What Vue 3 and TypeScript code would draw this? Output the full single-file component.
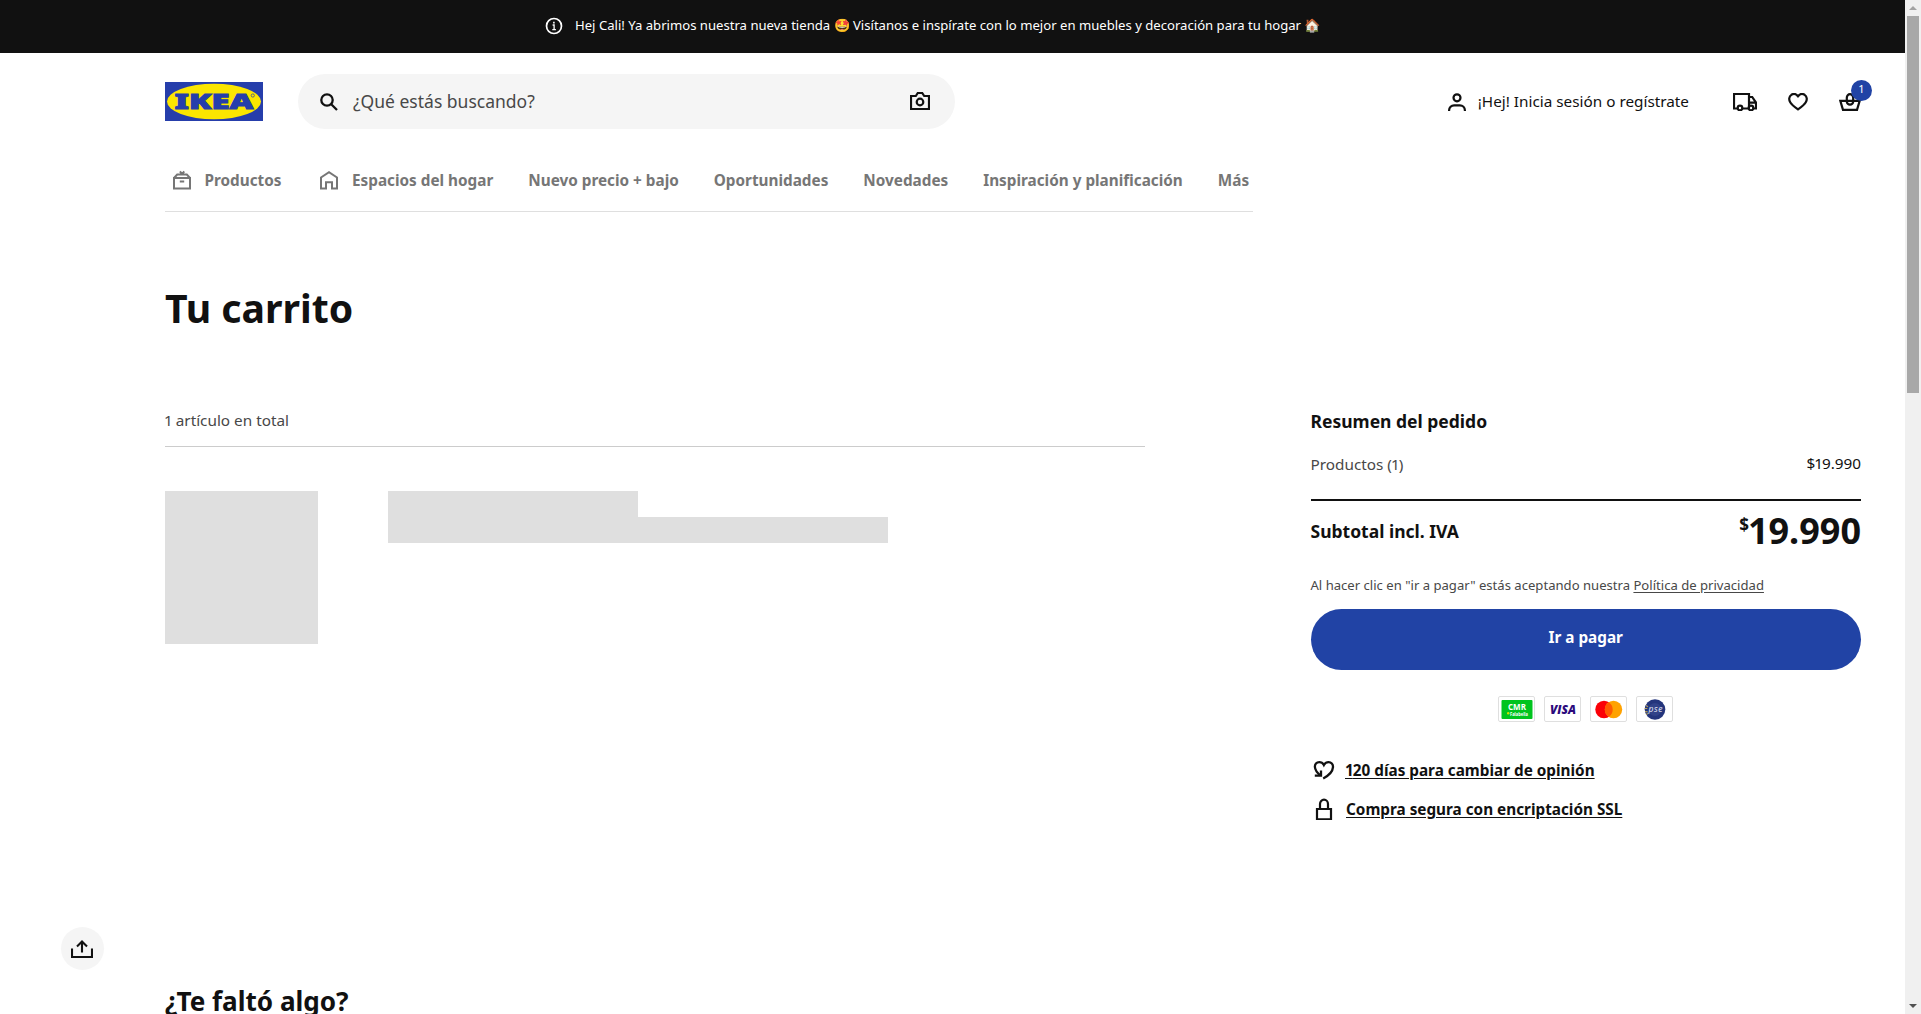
<script setup lang="ts">
const navItems: string[] = [
  'Nuevo precio + bajo',
  'Oportunidades',
  'Novedades',
  'Inspiración y planificación',
  'Más'
]
</script>

<template>
  <div class="page">
    <div class="content">
      <div class="banner">
        <svg class="info" viewBox="0 0 18 18" fill="none" stroke="currentColor">
          <circle cx="9" cy="9" r="7.5" stroke-width="1.7" />
          <path d="M7.6 8h1.5v4.8M7.3 12.6h3.6" stroke-width="1.3" />
          <path d="M8.1 5.6h1.6" stroke-width="1.8" />
        </svg>
        <span>Hej Cali! Ya abrimos nuestra nueva tienda 🤩 Visítanos e inspírate con lo mejor en muebles y decoración para tu hogar 🏠</span>
      </div>

      <header class="header">
        <svg class="logo" viewBox="0 0 98 39">
          <rect width="98" height="39" fill="#263eab" />
          <ellipse cx="49" cy="19.5" rx="47" ry="17.8" fill="#fbe600" />
          <text x="9.5" y="26.5" textLength="79" lengthAdjust="spacingAndGlyphs">IKEA</text>
          <circle cx="87.8" cy="13.5" r="1.6" fill="none" stroke="#263eab" stroke-width=".7" />
        </svg>
        <div class="search">
          <svg class="magnifier" viewBox="0 0 18 18" fill="none" stroke="#111" stroke-width="2.3">
            <circle cx="7" cy="7" r="5.7" />
            <path d="M11 11l6 6" />
          </svg>
          <span class="placeholder">¿Qué estás buscando?</span>
          <svg class="camera" viewBox="0 0 20 18" fill="none" stroke="#111" stroke-width="2.2">
            <path d="M1 4h4.8l2-3h4.4l2 3H19v13H1z" />
            <circle cx="10" cy="10" r="3.3" />
          </svg>
        </div>
        <div class="account">
          <svg class="user" viewBox="0 0 18 18" fill="none" stroke="#111" stroke-width="2.2">
            <circle cx="9" cy="4.8" r="3.5" />
            <path d="M1.1 18v-.7a5 5 0 0 1 5-5h5.8a5 5 0 0 1 5 5v.7" />
          </svg>
          <span>¡Hej! Inicia sesión o regístrate</span>
        </div>
        <svg class="truck" viewBox="0 0 24 18" fill="none" stroke="#111" stroke-width="2.2">
          <path d="M4 15.5H1V1h15v14.5M10 15.5h5.5M16 4h3.2L23 9.6v5.9h-2M16 9.6h7" />
          <circle cx="7" cy="15" r="2.3" />
          <circle cx="18" cy="15" r="2.3" />
        </svg>
        <svg class="heart" viewBox="0 0 20 18" fill="none" stroke="#111" stroke-width="2.2">
          <path d="M10 3.2C8.2.9 5.4.6 3.4 1.8 1 3.4.6 6.8 2.2 9.2 3.5 11.5 7 14.2 10 16.4c3-2.2 6.5-4.9 7.8-7.2 1.6-2.4 1.2-5.8-1.2-7.4C14.6.6 11.8.9 10 3.2z" />
        </svg>
        <div class="basket">
          <svg viewBox="0 0 22 18" fill="none" stroke="#111" stroke-width="2.2">
            <path d="M1.3 7.8h19.4L18 16.9H4z" />
            <path d="M7.8 8.5V4.8a3.2 3.6 0 0 1 6.4 0v3.7a3.2 3.2 0 0 1-6.4 0z" />
          </svg>
          <span class="badge">1</span>
        </div>
      </header>

      <nav class="nav">
        <span class="nav-item">
          <svg viewBox="0 0 26 26" fill="none" stroke="currentColor" stroke-width="2">
            <path d="M5 11h16v10.500H5zM5 11l3.200-3.500h9.600L21 11M11 4.300l2.200 3M15.200 4.300l-2.200 3M10.800 14.600h4.400" />
          </svg>
          <span>Productos</span>
        </span>
        <span class="nav-item">
          <svg viewBox="0 0 26 26" fill="none" stroke="currentColor" stroke-width="2">
            <path d="M5 21.500V10.500L13 5.200l8 5.300v11h-5v-6.300h-6v6.300z" />
          </svg>
          <span>Espacios del hogar</span>
        </span>
        <span v-for="item in navItems" :key="item">{{ item }}</span>
      </nav>

      <h1 class="title">Tu carrito</h1>

      <main class="main">
        <section class="items">
          <p class="count"><span class="one">1</span> artículo en total</p>
          <div class="skeleton">
            <div class="thumb" />
            <div class="lines">
              <div class="line short" />
              <div class="line" />
            </div>
          </div>
        </section>

        <aside class="summary">
          <h2 class="summary-title">Resumen del pedido</h2>
          <div class="row">
            <span>Productos (<span class="one">1</span>)</span>
            <span class="amount">$<span class="one">1</span>9.990</span>
          </div>
          <div class="subtotal">
            <span>Subtotal incl. IVA</span>
            <span class="price"><sup>$</sup>19.990</span>
          </div>
          <p class="terms">Al hacer clic en "ir a pagar" estás aceptando nuestra <u>Política de privacidad</u></p>
          <button class="pay">Ir a pagar</button>
          <div class="cards">
            <svg viewBox="0 0 37 26">
              <rect x=".5" y=".5" width="36" height="25" rx="1.5" fill="#fff" stroke="#dfdfdf" />
              <rect x="3.5" y="4" width="31" height="19" rx="1" fill="#00c41e" />
              <text x="10" y="14.3" class="cmr" textLength="18" lengthAdjust="spacingAndGlyphs">CMR</text>
              <circle cx="10.200" cy="17.2" r="1.2" fill="#d8e000" />
              <text x="12" y="19.6" class="falabella" textLength="18" lengthAdjust="spacingAndGlyphs">Falabella</text>
            </svg>
            <svg viewBox="0 0 37 26">
              <rect x=".5" y=".5" width="36" height="25" rx="1.5" fill="#fff" stroke="#dfdfdf" />
              <text x="6" y="18" class="visa" textLength="26" lengthAdjust="spacingAndGlyphs">VISA</text>
            </svg>
            <svg viewBox="0 0 37 26">
              <rect x=".5" y=".5" width="36" height="25" rx="1.5" fill="#fff" stroke="#dfdfdf" />
              <circle cx="14" cy="13.5" r="8.7" fill="#fb0007" />
              <circle cx="23.5" cy="13.5" r="8.7" fill="#ffa200" />
              <path d="M18.750 6.200a8.700 8.700 0 0 1 0 14.600a8.700 8.700 0 0 1 0-14.600z" fill="#ff5a00" />
            </svg>
            <svg viewBox="0 0 37 26">
              <rect x=".5" y=".5" width="36" height="25" rx="1.5" fill="#fff" stroke="#dfdfdf" />
              <circle cx="19" cy="13.5" r="10.3" fill="#24357c" />
              <circle cx="19" cy="13.5" r="6.5" fill="#3d4f93" opacity=".5" />
              <path d="M10 9.500l2 1.200M8.700 12.500h2.600M9 15.500l2.600.4M10 18.500l2-1" stroke="#b5a05a" stroke-width="1.2" />
              <text x="12.5" y="16" class="pse" textLength="14">pse</text>
            </svg>
          </div>
          <div class="perk">
            <svg viewBox="0 0 22 22" fill="none" stroke="#111" stroke-width="2.3">
              <path d="M10.200 19.500C15 17 19.700 12.500 20 8.200c.2-3-1.900-5-4.400-5-2 0-3.700 1-4.700 2.800C10 4.200 8.300 3.200 6.300 3.200 3.500 3.200 1.700 5.300 1.900 8c.2 2.600 2 5.500 5.300 8.400" />
              <path d="M8 11.500v5.200H1.800" />
            </svg>
            <u><span class="one">1</span>20 días para cambiar de opinión</u>
          </div>
          <div class="perk">
            <svg viewBox="0 0 22 22" fill="none" stroke="#111" stroke-width="2.2">
              <path d="M4 11h14v10.300H4zM7 10.500V6a4 4.300 0 0 1 8 0v4.500" />
            </svg>
            <u>Compra segura con encriptación SSL</u>
          </div>
        </aside>
      </main>

      <h2 class="missing">¿Te faltó algo?</h2>

      <button class="share" aria-label="Compartir">
        <svg viewBox="0 0 22 18" fill="none" stroke="#111" stroke-width="2.1">
          <path d="M1 8.500V17h20V8.500M11 12.500V1.500M6 6.500l5-5 5 5" />
        </svg>
      </button>
    </div>

    <div class="scrollbar">
      <span class="arrow up" />
      <span class="handle" />
      <span class="arrow down" />
    </div>
  </div>
</template>

<style>
body {
  margin: 0;
  overflow: hidden;
}
</style>

<style scoped>
.page {
  display: flex;
  height: 1014px;
  overflow: hidden;
  background: #fff;
  color: #111;
  font-family: 'Noto Sans', sans-serif;
  font-size: 15.3px;
}
svg { display: block; flex: none; }
button { border: 0; padding: 0; font: inherit; }
h1, h2, p { margin: 0; }
u { text-underline-offset: 2px; }
.content { flex: 1; min-width: 0; position: relative; }

.banner {
  height: 53px;
  background: #111;
  color: #fff;
  display: flex;
  box-sizing: border-box;
  padding: 0 0 2px 545px;
  align-items: center;
  font-size: 13.120px;
  white-space: nowrap;
}
.banner span { padding-bottom: 2px; }
.info { width: 18px; height: 18px; margin-right: 12px; }

.header { display: flex; align-items: center; height: 55px; padding: 21px 44px 0 165px; }
.logo { width: 98px; height: 39px; margin-right: 35px; }
.logo text { font-size: 20.5px; font-weight: 900; fill: #263eab; stroke: #263eab; stroke-width: .9px; }
.search {
  width: 657px;
  height: 55px;
  border-radius: 28px;
  background: #f5f5f5;
  display: flex;
  align-items: center;
  box-sizing: border-box;
  padding: 0 25px 0 22px;
}
.magnifier { width: 18px; height: 18px; margin-right: 15px; }
.placeholder { flex: 1; font-size: 17.5px; padding-bottom: 2px; color: #484848; }
.camera { width: 20px; height: 18px; margin-top: -2px; }
.account { display: flex; align-items: center; gap: 12px; margin-left: auto; margin-right: 44px; }
.account span { padding-bottom: 2px; }
.user { width: 18px; height: 18px; }
.truck { width: 24px; height: 18px; margin-right: 31px; }
.heart { width: 20px; height: 18px; margin-right: 31px; }
.basket { position: relative; }
.basket svg { width: 22px; height: 18px; }
.badge {
  position: absolute;
  left: 12px;
  top: -13px;
  width: 21px;
  height: 21px;
  border-radius: 50%;
  background: #2143a5;
  color: #fff;
  font-size: 11px;
  line-height: 18px;
  text-align: center;
}

.nav {
  width: fit-content;
  height: 62px;
  box-sizing: border-box;
  margin: 21px 0 0 165px;
  padding: 0 4px 2px;
  border-bottom: 1px solid #dfdfdf;
  display: flex;
  align-items: center;
  gap: 35px;
  color: #767676;
  font-weight: 700;
  white-space: nowrap;
}
.nav-item { display: flex; align-items: center; gap: 9.5px; }
.nav-item svg { width: 26px; height: 26px; }

.title { margin: 66px 0 0 165px; font-size: 39.2px; line-height: 60px; height: 60px; }

.main { display: flex; justify-content: space-between; height: 581px; margin: 62px 44px 0 165px; }
.items { width: 980px; }
.count { height: 46px; line-height: 40px; color: #484848; border-bottom: 1px solid #ccc; }
.one { margin-left: -1px; letter-spacing: -1px; }
.skeleton { display: flex; gap: 70px; margin-top: 44px; }
.thumb { width: 153px; height: 153px; background: #dfdfdf; }
.line { width: 500px; height: 26px; background: #dfdfdf; }
.line.short { width: 250px; }

.summary { width: 550.5px; }
.summary-title { font-size: 17.5px; line-height: 42px; }
.row { display: flex; justify-content: space-between; height: 47px; line-height: 24px; margin-top: 10px; color: #484848; }
.amount { color: #111; line-height: 22px; }
.subtotal {
  border-top: 2px solid #111;
  height: 60px;
  display: flex;
  justify-content: space-between;
  align-items: center;
  font-size: 17.5px;
  font-weight: 700;
}
.price { display: flex; font-size: 36px; line-height: 59px; height: 60px; }
.price sup { font-size: 17px; line-height: 47px; margin-right: -1px; }
.terms { margin-top: 12px; line-height: 24px; font-size: 13.1px; color: #484848; }
.pay {
  display: block;
  width: 100%;
  height: 61px;
  margin-top: 12px;
  padding-bottom: 5px;
  border-radius: 31px;
  background: #2143a5;
  color: #fff;
  font-weight: 700;
}
.cards { display: flex; justify-content: center; gap: 9px; margin: 26px 0 28px; }
.cards svg { width: 37px; height: 26px; }
.cmr { font: 700 9.5px 'Open Sans', sans-serif; fill: #fff; }
.falabella { font: 700 4.5px 'Open Sans', sans-serif; fill: #fff; }
.visa { font: italic 800 12.5px 'Open Sans', sans-serif; fill: #2b0a7c; }
.pse { font: italic 400 8.5px 'Open Sans', sans-serif; fill: #e6e9f5; }
.perk { display: flex; align-items: center; height: 39.5px; gap: 11.5px; padding-left: 2px; font-weight: 700; }
.perk svg { width: 22px; height: 22px; }

.missing { margin-left: 165px; font-size: 26.1px; line-height: 41px; white-space: nowrap; }

.share {
  position: absolute;
  left: 61px;
  top: 927px;
  width: 43px;
  height: 43px;
  border-radius: 50%;
  background: #f5f5f5;
  display: flex;
  align-items: center;
  justify-content: center;
}
.share svg { width: 22px; height: 18px; margin-right: 1px; }

.scrollbar {
  width: 16px;
  background: #f0f0f0;
  display: flex;
  flex-direction: column;
  align-items: center;
}
.handle { width: 12px; height: 377px; background: #a8a8a8; }
.arrow { width: 0; height: 0; border: 4px solid transparent; border-top-width: 0; border-bottom-width: 0; }
.arrow.up { border-bottom: 4px solid #a3a3a3; margin: 6px 0; }
.arrow.down { border-top: 4px solid #505050; margin: auto 0 6px; }
</style>
